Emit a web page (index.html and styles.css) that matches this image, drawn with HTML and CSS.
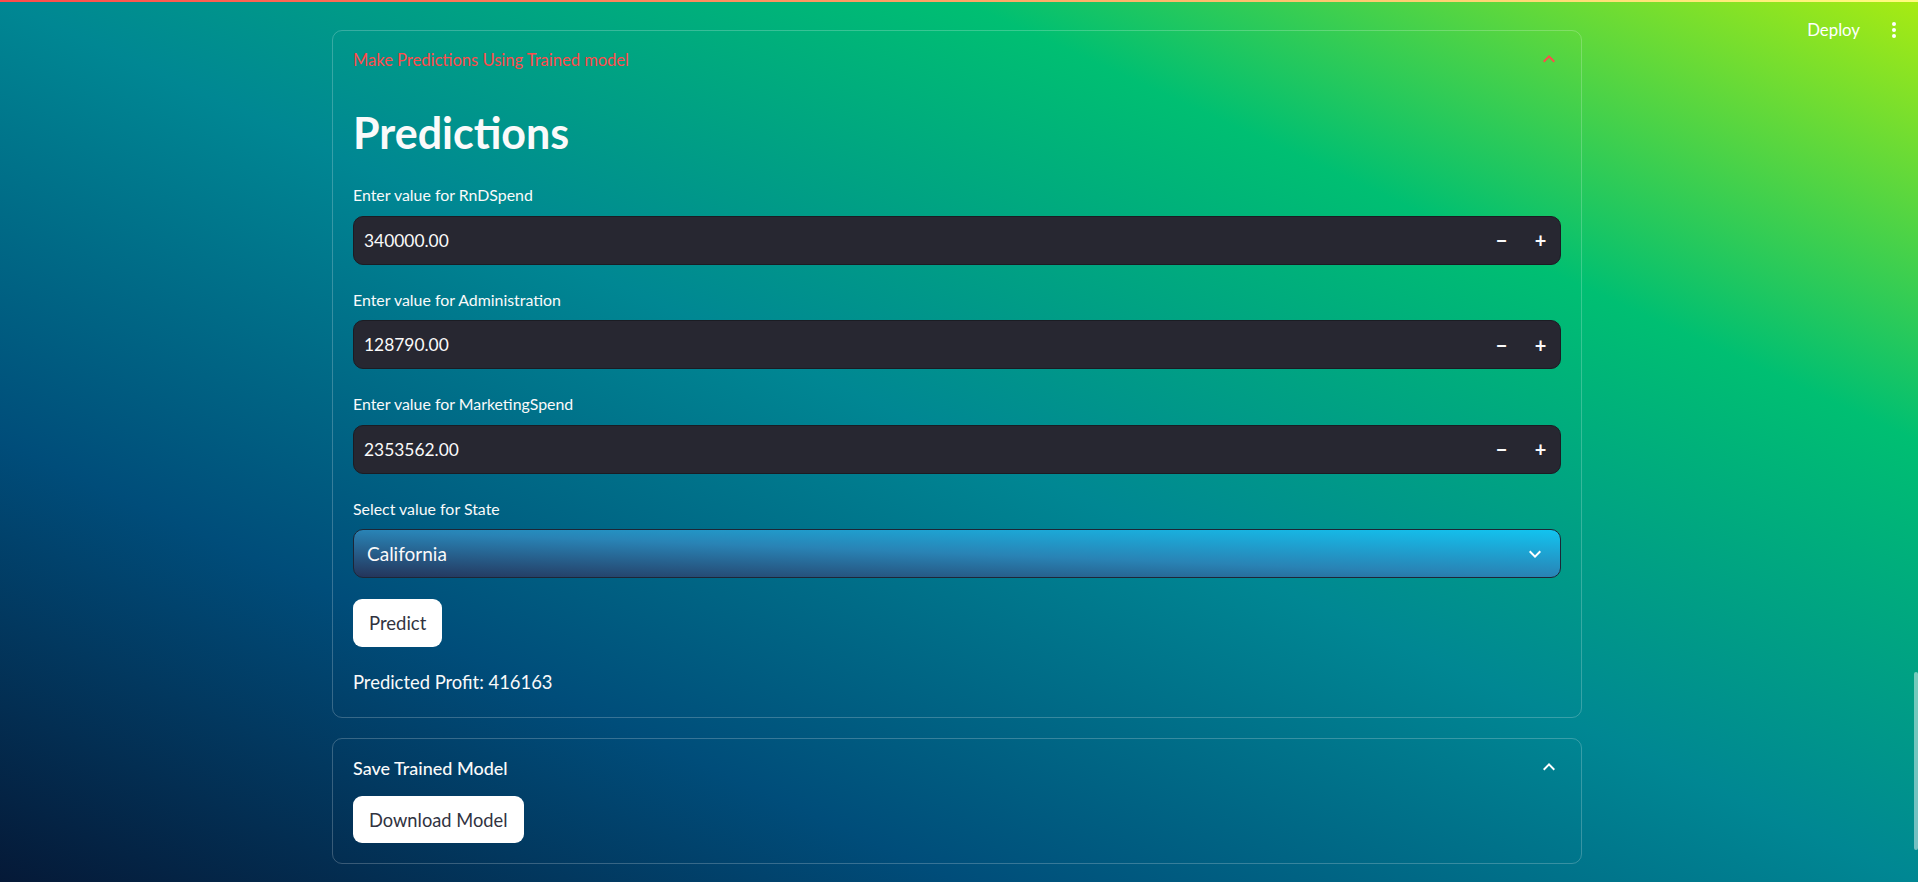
FILE: index.html
```html
<!DOCTYPE html>
<html lang="en">
<head>
<meta charset="utf-8">
<title>Predictions</title>
<link rel="stylesheet" href="styles.css">
</head>
<body>
<div class="decoration"></div>
<header class="toolbar">
  <span class="deploy">Deploy</span>
  <svg class="menu" width="6" height="18" viewBox="0 0 6 18"><circle cx="3" cy="3" r="2" fill="#fff"/><circle cx="3" cy="9" r="2" fill="#fff"/><circle cx="3" cy="15" r="2" fill="#fff"/></svg>
</header>
<main class="main">
  <section class="expander">
    <div class="summary summary-active">
      <span>Make Predictions Using Trained model</span>
      <svg class="chev" width="24" height="24" viewBox="0 0 24 24"><path d="M7.41 15.41L12 10.83l4.59 4.58L18 14l-6-6-6 6z" fill="#ff4b4b"/></svg>
    </div>
    <div class="body">
      <h1 class="title">Predictions</h1>
      <div class="field">
        <label class="label">Enter value for RnDSpend</label>
        <div class="number">
          <span class="value">340000.00</span>
          <span class="step">&minus;</span><span class="step">+</span>
        </div>
      </div>
      <div class="field">
        <label class="label">Enter value for Administration</label>
        <div class="number">
          <span class="value">128790.00</span>
          <span class="step">&minus;</span><span class="step">+</span>
        </div>
      </div>
      <div class="field">
        <label class="label">Enter value for MarketingSpend</label>
        <div class="number">
          <span class="value">2353562.00</span>
          <span class="step">&minus;</span><span class="step">+</span>
        </div>
      </div>
      <div class="field">
        <label class="label">Select value for State</label>
        <div class="select">
          <span class="value sel-value">California</span>
          <svg class="sel-chev" width="24" height="24" viewBox="0 0 24 24"><path d="M16.59 8.59L12 13.17 7.41 8.59 6 10l6 6 6-6z" fill="#fff"/></svg>
        </div>
      </div>
      <button class="btn predict">Predict</button>
      <p class="result">Predicted Profit: 416163</p>
    </div>
  </section>
  <section class="expander second">
    <div class="summary">
      <span>Save Trained Model</span>
      <svg class="chev" width="24" height="24" viewBox="0 0 24 24"><path d="M7.41 15.41L12 10.83l4.59 4.58L18 14l-6-6-6 6z" fill="#fff"/></svg>
    </div>
    <div class="body body-small">
      <button class="btn">Download Model</button>
    </div>
  </section>
</main>
<div class="scroll-thumb"></div>
</body>
</html>
```
FILE: styles.css
```css
html, body {
  margin: 0;
  padding: 0;
  height: 882px;
  overflow: hidden;
}
body {
  font-family: Lato, "Noto Sans", sans-serif;
  color: #fafafa;
  background: linear-gradient(to right top, #051937, #004d7a, #008793, #00bf72, #a8eb12);
  background-attachment: fixed;
  position: relative;
}
.decoration {
  position: absolute;
  top: 0;
  left: 0;
  right: 0;
  height: 2px;
  background: linear-gradient(90deg, #ff4b4b, #fffd80);
}
.toolbar {
  position: absolute;
  top: 16px;
  right: 21px;
  display: flex;
  align-items: center;
  gap: 31px;
}
.deploy {
  font-size: 16.8px;
  line-height: 28px;
  color: #fff;
}
.menu { display: block; }
.main {
  padding: 30px 0 0 332px;
}
.expander {
  box-sizing: border-box;
  width: 1250px;
  border: 1px solid rgba(250, 250, 250, 0.22);
  border-radius: 10px;
}
.second { margin-top: 20px; }
.summary {
  display: flex;
  align-items: center;
  justify-content: space-between;
  height: 57px;
  padding: 0 20px;
  font-size: 16.5px;
}
.second .summary {
  font-size: 18px;
  font-weight: 500;
}
.summary-active { color: #ff4b4b; }
.chev { display: block; margin-top: -2px; }
.body {
  padding: 0 20px 23px 20px;
}
.body-small { padding-bottom: 20px; }
.title {
  margin: 20px 0 0 0;
  font-size: 43px;
  line-height: 50px;
  font-weight: 700;
  color: #fafafa;
}
.field { margin-top: 27px; }
.field + .field { margin-top: 25px; }
.label {
  display: block;
  font-size: 15.9px;
  line-height: 20px;
  margin-bottom: 10.5px;
  color: #fafafa;
}
.number {
  box-sizing: border-box;
  display: flex;
  align-items: center;
  height: 49px;
  border: 1px solid #1b1c23;
  border-radius: 10px;
  background: #272731;
  padding-left: 10px;
}
.value {
  flex: 1;
  font-size: 17.4px;
  color: #fafafa;
}
.sel-value { font-size: 19px; }
.step {
  width: 39px;
  text-align: center;
  font-size: 20px;
  font-weight: 700;
  color: #fafafa;
}
.select {
  box-sizing: border-box;
  display: flex;
  align-items: center;
  height: 49px;
  border: 1px solid #1d2636;
  border-radius: 10px;
  background: linear-gradient(to right top, #24345a, #2983b5 50%, #12c4f0);
  padding: 0 13px 0 13px;
}
.sel-chev { display: block; }
.btn {
  display: block;
  box-sizing: border-box;
  height: 48px;
  padding: 0 16px;
  margin-top: 21px;
  border: none;
  border-radius: 9px;
  background: #ffffff;
  color: #31333f;
  font-family: Lato, "Noto Sans", sans-serif;
  font-size: 18.5px;
}
.body-small .btn { margin-top: 0; height: 47px; font-size: 18.3px; }
.result {
  margin: 23px 0 0 0;
  font-size: 18.4px;
  line-height: 24px;
  color: #fafafa;
}
.scroll-thumb {
  position: absolute;
  right: 0;
  top: 672px;
  width: 4px;
  height: 178px;
  border-radius: 2px;
  background: rgba(255, 255, 255, 0.45);
}
```
